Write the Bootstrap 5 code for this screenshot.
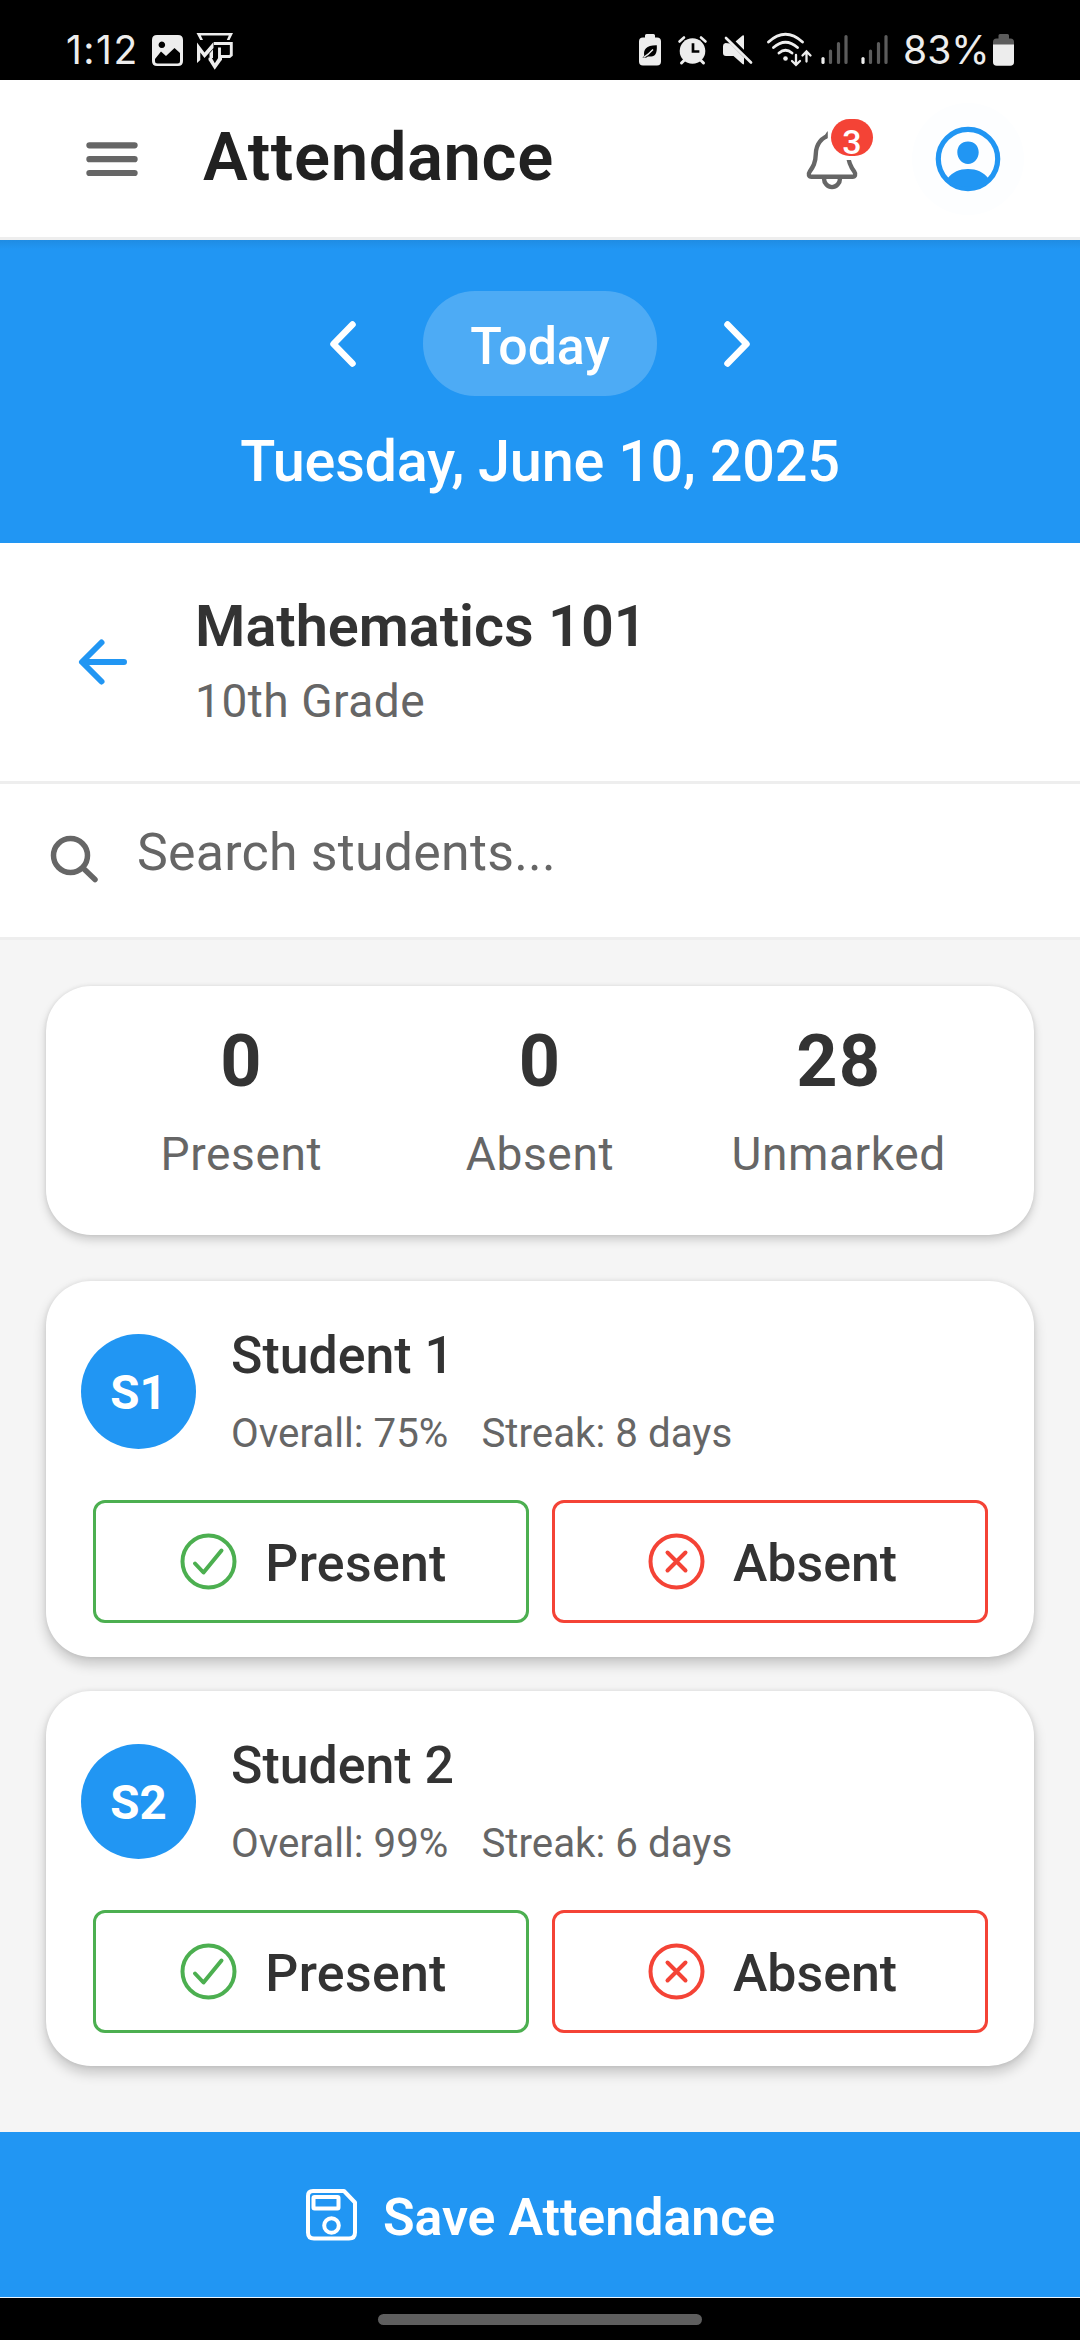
<!DOCTYPE html>
<html lang="en">
<head>
<meta charset="utf-8">
<meta name="viewport" content="width=device-width, initial-scale=1">
<title>Attendance</title>
<link href="https://cdn.jsdelivr.net/npm/bootstrap@5.3.0/dist/css/bootstrap.min.css" rel="stylesheet">
<style>
  :root { --brand: #2196f3; --ink: #333; --soft: #666; --ok: #4caf50; --bad: #f44336; }
  body { width: 1080px; height: 2340px; overflow: hidden; background: #f5f5f5; color: var(--ink); font-family: Roboto, sans-serif; }
  svg { display: block; flex: none; }
  .bg-brand { background: var(--brand); }
  .soft { color: var(--soft); }

  .status-bar { height: 80px; padding: 20px 63px 0 66px; background: #000; color: #ededed; font: 400 39px/60px Inter, sans-serif; }
  .clock { width: 78px; letter-spacing: 1.5px; }
  .charge { width: 97px; padding-left: 8px; }

  .app-bar { height: 160px; padding: 0 56px 0 86px; border-bottom: 3px solid #eee; }
  .app-title { margin: 0 0 3px 65px; font-size: 67px; font-weight: 600; line-height: 80px; letter-spacing: .6px; color: #212121; }
  .bell { margin-right: 53px; }
  .bell-count { left: 26px; top: -7px; width: 42px; height: 37px; border-radius: 19px; background: var(--bad); font-size: 34px; font-weight: 500; line-height: 37px; padding-top: 5px; }
  .profile { width: 112px; height: 112px; background: #fdfeff; }

  .date-panel { height: 303px; padding-top: 51px; background: linear-gradient(#1f8ce3, var(--brand) 9px); }
  .day-nav { gap: 67px; }
  .today-pill { width: 234px; height: 105px; padding: 6px 0 0; border: 0; border-radius: 52px; background: rgba(255,255,255,.2); color: #fff; font-size: 51.84px; font-weight: 500; line-height: 60px; }
  .date-text { margin-top: 31px; font-size: 57.6px; font-weight: 500; line-height: 70px; letter-spacing: -.25px; }

  .class-bar { height: 241px; padding: 0 76px; border-bottom: 3px solid #eee; }
  .class-text { padding-top: 49px; margin-left: 65px; }
  .class-name { font-size: 57.6px; font-weight: 600; line-height: 70px; color: var(--ink); }
  .class-grade { margin-top: 9px; font-size: 46.08px; line-height: 60px; letter-spacing: .5px; }

  .search-bar { height: 156px; padding: 0 50px; border-bottom: 3px solid #eee; }
  .search-bar svg { margin-top: 50px; }
  .search-input { margin: 34px 0 0 37px; padding: 0; border: 0; font: 400 51.84px/70px Roboto, sans-serif; height: 70px; letter-spacing: .25px; }
  .search-input, .search-input:focus { box-shadow: none; color: var(--soft); }
  .search-input::placeholder { color: var(--soft); opacity: 1; }

  .content-area { height: 1192px; padding: 46px 46px 0; }
  .panel { --bs-card-border-width: 0; --bs-card-bg: #fff; border-radius: 45px; box-shadow: 0 7px 13px rgba(0,0,0,.2), 0 0 5px rgba(0,0,0,.09); }
  .stats { height: 249px; padding: 36px 46px 0; margin-bottom: 46px; box-shadow: 0 5px 10px rgba(0,0,0,.17), 0 0 4px rgba(0,0,0,.09); }
  .stat-num { font-size: 72px; font-weight: 700; line-height: 80px; letter-spacing: 1px; }
  .stat-label { margin-top: 22px; font-size: 46.08px; line-height: 60px; letter-spacing: .6px; }
  .student { height: 376px; margin-bottom: 34px; }
  .student + .student { height: 375px; }
  .student-head { height: 219px; padding: 45px 35px 0; }
  .avatar { width: 115px; height: 115px; margin-top: 8px; padding-top: 4px; font-size: 47.5px; font-weight: 700; }
  .student-info { margin-left: 35px; }
  .student-name { font-size: 51.84px; font-weight: 500; line-height: 60px; }
  .student-meta { margin-top: 23px; font-size: 40.32px; line-height: 50px; gap: 33px; }
  .choices { padding: 0 46px 0 47px; gap: 23px; }
  .choice { height: 123px; padding: 0 0 0 5px; border: 3px solid; border-radius: 12px; background: #fff; font-size: 51.84px; font-weight: 500; gap: 28px; }
  .choice svg { margin-bottom: 1px; }
  .choice span { padding-top: 4px; color: var(--ink); line-height: 60px; }
  .choice-ok, .choice-ok:hover { border-color: var(--ok); color: var(--ok); }
  .choice-no, .choice-no:hover { border-color: var(--bad); color: var(--bad); }
  .choice-ok { letter-spacing: .3px; }

  .save-btn { height: 165px; padding: 0; border: 0; border-radius: 0; color: #fff; font-size: 51.84px; font-weight: 600; line-height: 60px; gap: 25px; }
  .save-btn span { padding-top: 7px; }
  .gesture-bar { height: 43px; border-top: 1px solid #e9f4fd; padding-top: 16px; background: #000; }
  .gesture-pill { width: 324px; height: 11px; background: #5e5e5e; }
</style>
</head>
<body class="d-flex flex-column">

<div class="status-bar d-flex align-items-center flex-shrink-0">
  <div class="clock">1:12</div>
  <svg width="46" height="40" viewBox="144 30 46 40"><path fill="#ededed" fill-rule="evenodd" d="M157 35h21q5 0 5 5v21q0 5-5 5h-21q-5 0-5-5V40q0-5 5-5ZM161.800 41.500a3.300 3.300 0 1 0 .1 0ZM155 59v2q0 2.500 2.500 2.500h20q2.500 0 2.500-2.500v-8l-5.500-5-8.500 8-5-4.500Z"/></svg>
  <svg width="44" height="40" viewBox="190 30 44 40"><path fill="#ededed" fill-rule="evenodd" d="M196.500 33H233L229.500 40H226.800L228.800 35.600H200.800L203 40H200.200Z"/><path fill="#ededed" d="M197 63V42.500L204.500 52.500 213.500 42V48L204.500 58 200.300 52.500V60ZM209.500 53.500 213 49.500V58H209.500Z"/><path fill="none" stroke="#ededed" stroke-width="2.900" d="M214 43.500H231.300V55L229.500 56.500H219.500V47.500"/><path fill="none" stroke="#ededed" stroke-width="2.600" d="M208.500 59H211L214.800 65.800 219 59H222M209.500 59 214.800 67.500 220.800 59"/></svg>
  <div class="d-flex align-items-center ms-auto">
    <svg width="40" height="40" viewBox="630 30 40 40"><path fill="#ededed" d="M646.500 34h7q1.500 0 1.500 1.500V37.500h2q4 0 4 4v20q0 4-4 4h-14q-4 0-4-4v-20q0-4 4-4h2v-2q0-1.500 1.500-1.500Z"/><path d="M656.800 45.300c.5 8-1.500 11-5.600 11.200-2 .2-3.500-.2-4.700 1l-4 .6 1.700-2.700c-1-5.500 2-10.300 12.600-10.100Z"/><path d="M643.500 57.500q5-3 9.500-8" stroke="#ededed" stroke-width="1.300" fill="none"/></svg>
    <svg width="45" height="40" viewBox="670 30 45 40" fill="none" stroke="#ededed" stroke-linecap="round"><circle cx="692.500" cy="51" r="12.800" fill="#ededed" stroke="none"/><path stroke-width="2.600" d="M679.500 41.500 684 37.500M705.500 41.500 701 37.500"/><path stroke-width="3" d="M684 60.500 681.500 63M701 60.500 703.500 63"/><path stroke="#000" stroke-width="2.700" stroke-linecap="square" d="M693 44.500V51.500H698"/></svg>
    <svg width="45" height="40" viewBox="715 30 45 40"><path fill="#ededed" d="M725.500 43 730 43.500 744 57.500V63.500Q744 65 742.500 64L733.500 56H726Q723 56 723 53V46Q723 43.300 725.500 43ZM735.500 41.500 742.500 35.500Q744 34.500 744 36.500V50Z"/><path stroke="#000" stroke-width="2.500" d="M728 36 754 62"/><path stroke="#ededed" stroke-width="2.700" stroke-linecap="round" d="M726 38 751 62.500"/></svg>
    <svg width="55" height="40" viewBox="760 30 55 40" fill="none" stroke="#ededed" stroke-width="2.800" stroke-linecap="round"><path d="M768.500 42Q785.500 26.500 802.500 42M773.500 47.500Q785.500 37 797.500 47.500M779 53Q785.500 47.500 792 53"/><circle cx="785.500" cy="58.500" r="2.300" fill="#ededed" stroke="none"/><path stroke-width="2.300" d="M796 55V64.500M792 61 796 64.800 800 61M806.500 61.500V52M802.500 55.500 806.500 51.500 810.500 55.500"/></svg>
    <svg width="40" height="40" viewBox="815 30 40 40" stroke="#5c5c5c" stroke-width="3.200" stroke-linecap="round"><path stroke="#ededed" d="M823 58.500V62.500"/><path d="M830.500 51V62.500M838.500 43.500V62.500M846 36.500V62.500"/></svg>
    <svg width="40" height="40" viewBox="856 30 40 40" stroke="#5c5c5c" stroke-width="3.200" stroke-linecap="round"><path stroke="#ededed" d="M864 58.500V62.500"/><path d="M871.500 51V62.500M879.500 43.500V62.500M887 36.500V62.500"/></svg>
    <div class="charge">83%</div>
    <svg width="25" height="40" viewBox="992 30 25 40"><path fill="#5c5c5c" d="M1000 34h7.500q1.500 0 1.500 1.500V38.500h1.500q3.500 0 3.500 3.500v3h-21v-3q0-3.500 3.500-3.500h2v-3q0-1.500 1.500-1.500Z"/><path fill="#ededed" d="M993 44.500h21V62q0 3.800-3.800 3.800h-13.400Q993 65.800 993 62Z"/></svg>
  </div>
</div>

<header class="app-bar d-flex align-items-center bg-white flex-shrink-0">
  <svg width="52" height="36" viewBox="0 0 52 36" stroke="#666" stroke-width="6.200" stroke-linecap="round"><path d="M3.400 4.300H48.600M3.400 18.200H48.600M3.400 32H48.600"/></svg>
  <h1 class="app-title">Attendance</h1>
  <div class="bell position-relative ms-auto">
    <svg width="54" height="66" viewBox="805 125 54 66"><g fill="none" stroke="#666" stroke-width="4.400" stroke-linejoin="round"><path d="M832 133C819 137 816 145 815.800 153 815.600 162 813 166 809.800 170.500 807.700 173.500 809 175.800 811.500 175.800H852.500C855 175.800 856.300 173.500 854.200 170.500 850.500 165.500 848.500 160 848.300 155"/><path d="M824 177.500A8 8.600 0 0 0 840 177.500"/></g><path d="M824.500 138.500Q824 133.500 828 130V137Z" fill="#666"/><path fill="#fff" d="M827.800 125H860V159H842L827.800 139Z"/></svg>
    <div class="bell-count position-absolute text-white text-center">3</div>
  </div>
  <div class="profile rounded-circle d-flex align-items-center justify-content-center">
    <svg width="66" height="66" viewBox="0 0 66 66"><circle cx="33" cy="33" r="29.700" fill="none" stroke="#2196f3" stroke-width="5.200"/><path fill="#2196f3" d="M33 15.500C39.500 15.500 43.700 20 43.700 26.300S39 38 33 38 22.300 32.600 22.300 26.300 26.500 15.500 33 15.500ZM12.500 52.500C17.500 46 24.500 43 33 43S48.500 46 53.500 52.500A29 29 0 0 1 12.500 52.500Z"/></svg>
  </div>
</header>

<section class="date-panel text-white text-center flex-shrink-0">
  <div class="day-nav d-flex justify-content-center align-items-center">
    <svg width="26" height="46" viewBox="0 0 26 46" fill="none" stroke="#fff" stroke-width="6.500" stroke-linecap="round" stroke-linejoin="round"><path d="M22.500 3.500 3.500 23 22.500 42.500"/></svg>
    <button class="today-pill btn">Today</button>
    <svg width="26" height="46" viewBox="0 0 26 46" fill="none" stroke="#fff" stroke-width="6.500" stroke-linecap="round" stroke-linejoin="round"><path d="M3.500 3.500 22.500 23 3.500 42.500"/></svg>
  </div>
  <div class="date-text">Tuesday, June 10, 2025</div>
</section>

<section class="class-bar d-flex align-items-start bg-white flex-shrink-0">
  <svg class="align-self-center" width="54" height="50" viewBox="0 0 54 50" fill="none" stroke="#2196f3" stroke-width="6" stroke-linecap="round" stroke-linejoin="round"><path d="M25.500 5.500 6 25 25.500 44.500M6.500 25H48"/></svg>
  <div class="class-text">
    <h2 class="class-name mb-0">Mathematics 101</h2>
    <div class="class-grade soft">10th Grade</div>
  </div>
</section>

<section class="search-bar d-flex align-items-start bg-white flex-shrink-0">
  <svg width="50" height="50" viewBox="0 0 50 50" fill="none" stroke="#666" stroke-linecap="round"><circle cx="20.500" cy="21.500" r="17" stroke-width="5.500"/><path stroke-width="5.500" d="M33 34 45 45.500"/></svg>
  <input class="search-input form-control" type="text" placeholder="Search students...">
</section>

<main class="content-area flex-shrink-0">
  <div class="card panel stats">
    <div class="row g-0 text-center">
      <div class="col"><div class="stat-num">0</div><div class="stat-label soft">Present</div></div>
      <div class="col"><div class="stat-num">0</div><div class="stat-label soft">Absent</div></div>
      <div class="col"><div class="stat-num">28</div><div class="stat-label soft">Unmarked</div></div>
    </div>
  </div>

  <div class="card panel student">
    <div class="student-head d-flex align-items-start">
      <div class="avatar bg-brand rounded-circle text-white d-flex align-items-center justify-content-center">S1</div>
      <div class="student-info">
        <div class="student-name">Student 1</div>
        <div class="student-meta d-flex soft"><span>Overall: 75%</span><span>Streak: 8 days</span></div>
      </div>
    </div>
    <div class="choices d-flex">
      <button class="choice choice-ok btn flex-fill w-50 d-flex align-items-center justify-content-center"><svg width="57" height="57" viewBox="0 0 57 57" fill="none" stroke="currentColor" stroke-width="4" stroke-linecap="round" stroke-linejoin="round"><circle cx="28.500" cy="28.500" r="26"/><path d="M15 30.500 23.500 39.500 41.500 17.500"/></svg><span>Present</span></button>
      <button class="choice choice-no btn flex-fill w-50 d-flex align-items-center justify-content-center"><svg width="57" height="57" viewBox="0 0 57 57" fill="none" stroke="currentColor" stroke-width="4" stroke-linecap="round"><circle cx="28.500" cy="28.500" r="26"/><path d="M19.500 19.500 37.500 37.500M37.500 19.500 19.500 37.500"/></svg><span>Absent</span></button>
    </div>
  </div>

  <div class="card panel student">
    <div class="student-head d-flex align-items-start">
      <div class="avatar bg-brand rounded-circle text-white d-flex align-items-center justify-content-center">S2</div>
      <div class="student-info">
        <div class="student-name">Student 2</div>
        <div class="student-meta d-flex soft"><span>Overall: 99%</span><span>Streak: 6 days</span></div>
      </div>
    </div>
    <div class="choices d-flex">
      <button class="choice choice-ok btn flex-fill w-50 d-flex align-items-center justify-content-center"><svg width="57" height="57" viewBox="0 0 57 57" fill="none" stroke="currentColor" stroke-width="4" stroke-linecap="round" stroke-linejoin="round"><circle cx="28.500" cy="28.500" r="26"/><path d="M15 30.500 23.500 39.500 41.500 17.500"/></svg><span>Present</span></button>
      <button class="choice choice-no btn flex-fill w-50 d-flex align-items-center justify-content-center"><svg width="57" height="57" viewBox="0 0 57 57" fill="none" stroke="currentColor" stroke-width="4" stroke-linecap="round"><circle cx="28.500" cy="28.500" r="26"/><path d="M19.500 19.500 37.500 37.500M37.500 19.500 19.500 37.500"/></svg><span>Absent</span></button>
    </div>
  </div>
</main>

<button class="save-btn bg-brand btn d-flex align-items-center justify-content-center flex-shrink-0">
  <svg width="53" height="53" viewBox="0 0 53 53" fill="none" stroke="#fff" stroke-width="4" stroke-linejoin="round"><path d="M8 3H39L50 14.500V44.500Q50 50.500 44 50.500H9Q3 50.500 3 44.500V8Q3 3 8 3Z"/><rect x="8.500" y="9" width="25" height="11.500" rx="1"/><circle cx="26.500" cy="37.500" r="7.300"/></svg>
  <span>Save Attendance</span>
</button>
<div class="gesture-bar flex-shrink-0"><div class="gesture-pill rounded-pill mx-auto"></div></div>

<script src="https://cdn.jsdelivr.net/npm/bootstrap@5.3.0/dist/js/bootstrap.bundle.min.js"></script>
</body>
</html>
